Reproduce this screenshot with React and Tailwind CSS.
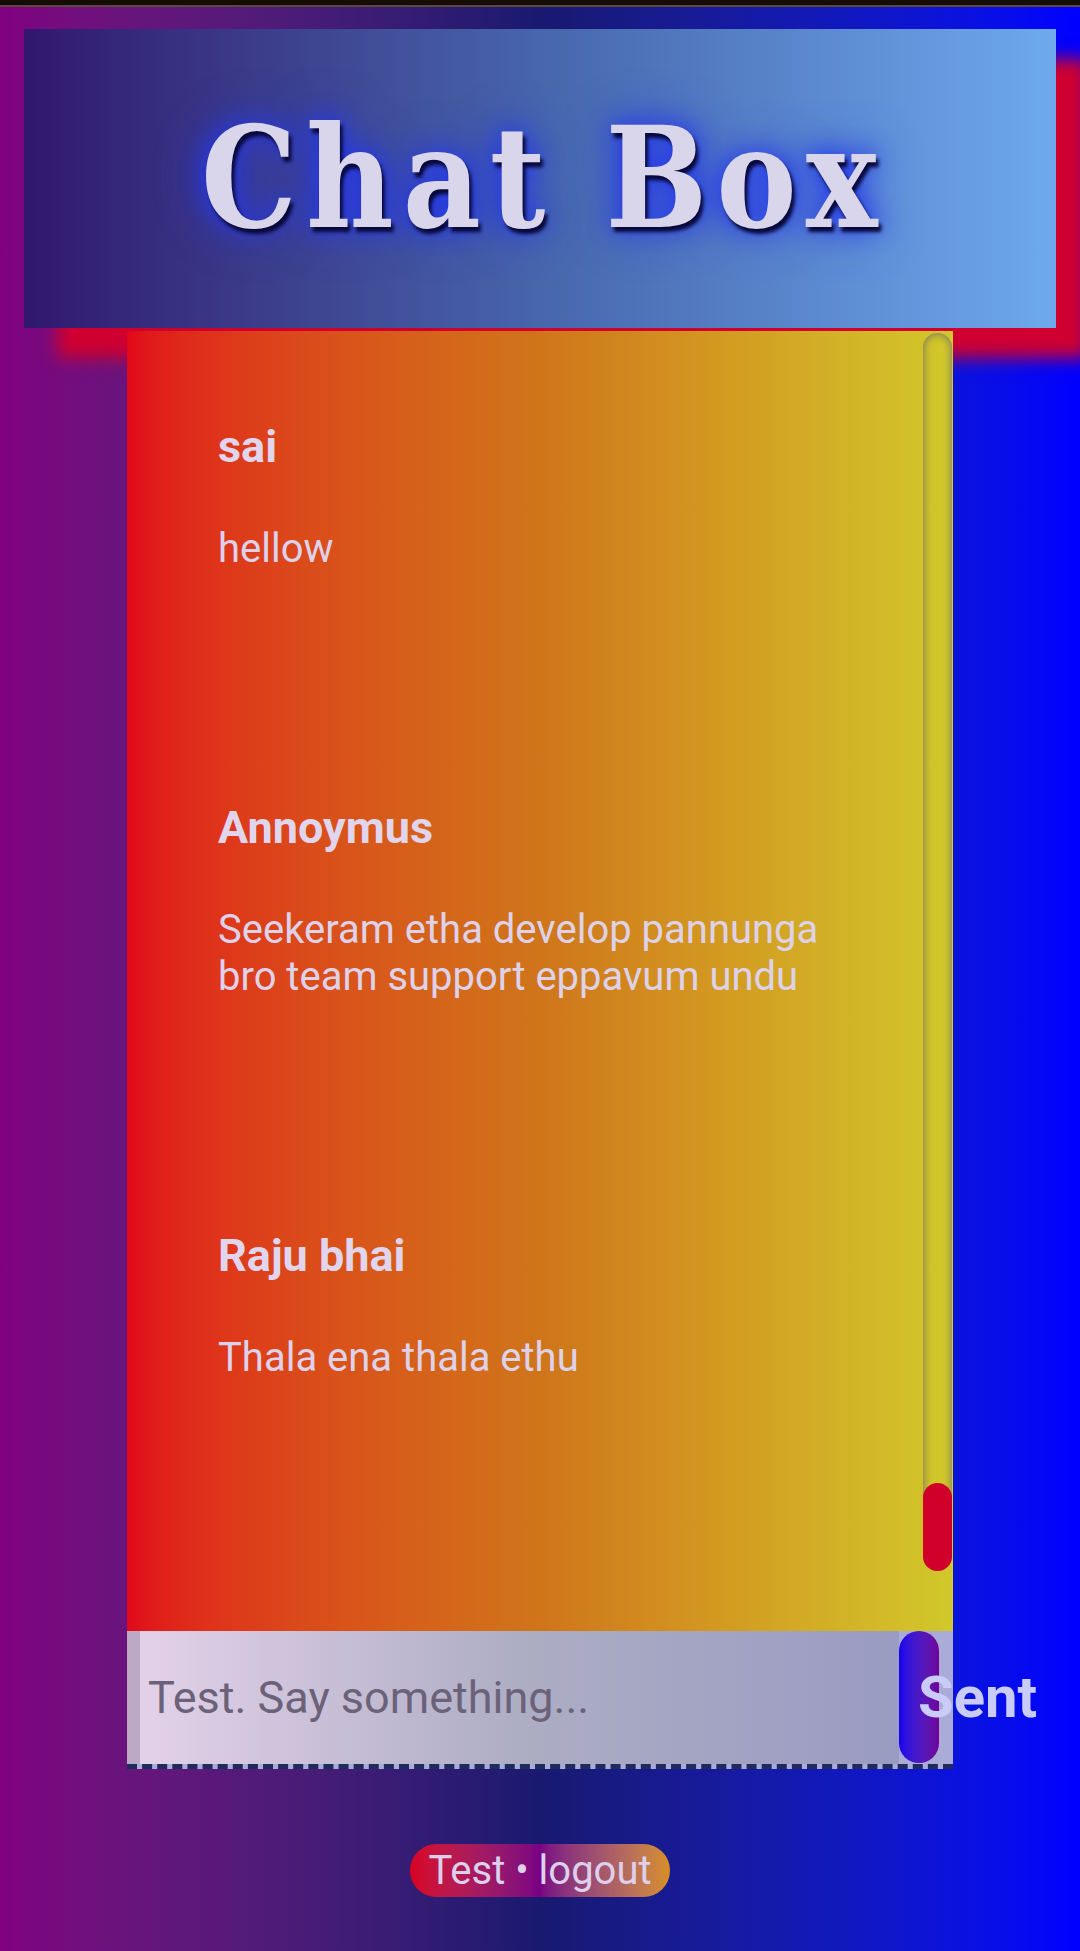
const MESSAGES = [
  { name: 'sai', text: 'hellow' },
  { name: 'Annoymus', text: 'Seekeram etha develop pannunga bro team support eppavum undu' },
  { name: 'Raju bhai', text: 'Thala ena thala ethu' },
];

function Message({ name, text }) {
  return (
    <div>
      <h3 className="text-[45px] leading-[53px] font-bold text-[#e0d5ec]">{name}</h3>
      <p className="mt-[52px] text-[40px] leading-[47px] text-[#ddd2ea]">{text}</p>
    </div>
  );
}

export default function App() {
  return (
    <div className="min-h-screen bg-linear-to-r from-[#800080] via-[#191970] to-[#0000ff] font-['Roboto',sans-serif]">
      <div className="h-[5px] bg-[#140c05]" />
      <div className="h-[2px] bg-[#5b4a39]" />

      {/* title */}
      <div className="px-6 pt-[22px]">
        <header className="h-[299px] flex items-center justify-center bg-linear-to-r from-[#30176f] via-[#4766ac] to-[#6ea9ee] shadow-[33px_30px_16px_#cf0030]">
          <h1 className="-mt-[3px] ml-[8px] scale-x-[0.95] font-['DejaVu_Serif_Condensed','DejaVu_Serif',serif] font-stretch-condensed font-bold text-[141px] leading-none tracking-[9.5px] text-[#d9d5ea] [text-shadow:3px_5px_4px_#08083a,0_0_24px_#2236f0,0_0_48px_#2a3ae0]">
            Chat Box
          </h1>
        </header>
      </div>

      {/* chat panel */}
      <main className="w-[826px] mx-auto mt-[3px]">
        <div className="h-[1300px] flex bg-linear-to-r from-[#e1061a] via-[#cf751a] to-[#d1c82b]">
          <div className="flex-1 px-[91px] pt-[89px] flex flex-col gap-[229px] overflow-hidden">
            {MESSAGES.map((m) => (
              <Message key={m.name} name={m.name} text={m.text} />
            ))}
          </div>
          <div className="w-[29px] mr-[1px] mt-[2px] mb-[60px] rounded-full shadow-[inset_0_0_8px_#6a6a6a] flex flex-col justify-end">
            <div className="h-[88px] rounded-full bg-[#d0002a]" />
          </div>
        </div>

        <form
          className="flex h-[138px] bg-[#aaabd6] border-b-[5px] border-dashed border-[#1f2b5e]"
          onSubmit={(e) => e.preventDefault()}
        >
          <input
            type="text"
            placeholder="Test. Say something..."
            className="flex-1 min-w-0 h-full border-l-[13px] border-[#bca9c6] pl-[8px] bg-linear-to-r from-[#e3d1e9] via-[#adadc4] to-[#9a9bc2] text-[45px] text-[#3b3448] placeholder:text-[#6b6279] outline-none"
          />
          <button
            type="submit"
            className="w-[40px] h-[132px] mr-[14px] rounded-full bg-linear-to-r from-[#1200ee] to-[#70009a] flex items-center justify-start pl-[19px] overflow-visible"
          >
            <span className="whitespace-nowrap text-[58px] font-bold text-[#c9cbf8]">Sent</span>
          </button>
        </form>
      </main>

      {/* user */}
      <footer className="flex justify-center pt-[75px] pb-[54px]">
        <div className="px-[18px] py-[3px] rounded-full bg-linear-to-r from-[#d9001f] via-[#7a0083] to-[#d78f1f] text-[40px] leading-[47px] text-[#dcd0ea] whitespace-nowrap">
          Test • logout
        </div>
      </footer>
    </div>
  );
}
